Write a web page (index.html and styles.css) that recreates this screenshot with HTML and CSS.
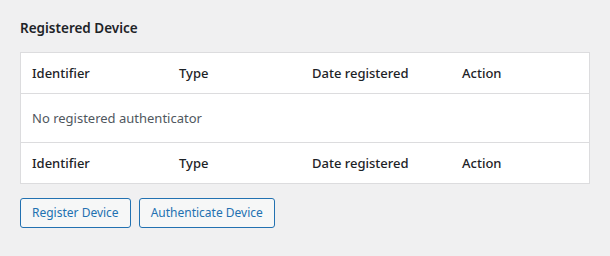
FILE: index.html
```html
<!DOCTYPE html>
<html lang="en">
<head>
    <meta charset="UTF-8">
    <title>Registered Device</title>
    <link rel="stylesheet" href="styles.css">
</head>
<body>
    <div class="wrap">
        <h2 class="title">Registered Device</h2>
        <table class="widefat">
            <thead>
                <tr>
                    <th class="col-id">Identifier</th>
                    <th class="col-type">Type</th>
                    <th class="col-date">Date registered</th>
                    <th>Action</th>
                </tr>
            </thead>
            <tbody>
                <tr>
                    <td colspan="4">No registered authenticator</td>
                </tr>
            </tbody>
            <tfoot>
                <tr>
                    <th>Identifier</th>
                    <th>Type</th>
                    <th>Date registered</th>
                    <th>Action</th>
                </tr>
            </tfoot>
        </table>
        <div class="actions">
            <button type="button" class="button">Register Device</button>
            <button type="button" class="button">Authenticate Device</button>
        </div>
    </div>
</body>
</html>
```

FILE: styles.css
```css
body {
    margin: 0;
    background-color: #f0f0f1;
    font-family: 'Noto Sans', sans-serif;
    font-size: 13px;
    color: #3c434a;
}
.wrap {
    padding: 18px 20px 0 20px;
    width: 570px;
}
.title {
    margin: 0 0 14px;
    font-size: 13.5px;
    font-weight: 600;
    color: #1d2327;
    line-height: 20px;
}
.widefat {
    width: 100%;
    border-collapse: collapse;
    background-color: #fff;
    border: 1px solid #dcdcde;
}
.widefat th {
    text-align: left;
    font-weight: 500;
    font-size: 13px;
    color: #1d2327;
    padding: 10px 11px 10px 11px;
    line-height: 20px;
}
.widefat td {
    padding: 14px 11px 14px 11px;
    font-size: 13px;
    line-height: 20px;
    color: #50575e;
    border-top: 1px solid #dcdcde;
    border-bottom: 1px solid #dcdcde;
}
.col-id {
    width: 125px;
}
.col-type {
    width: 111px;
}
.col-date {
    width: 128px;
}
.actions {
    display: flex;
    gap: 8px;
    margin-top: 14px;
}
.button {
    font-family: inherit;
    font-size: 12px;
    color: #2271b1;
    background-color: #f6f7f7;
    border: 1px solid #2271b1;
    border-radius: 3px;
    padding: 0 11px 0 11px;
    height: 30px;
    line-height: 28px;
    cursor: pointer;
}
.button + .button {
    margin-left: 0;
}
```
